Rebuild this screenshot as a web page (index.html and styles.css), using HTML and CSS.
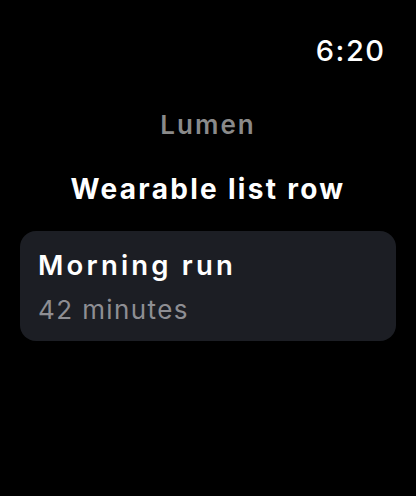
FILE: index.html
```html
<!DOCTYPE html>
<html lang="en">
<head>
    <meta charset="UTF-8">
    <meta name="viewport" content="width=device-width, initial-scale=1.0">
    <title>Wearable list row</title>
    <link rel="stylesheet" href="styles.css">
</head>
<body>
    <div class="watch">
        <div class="status-bar">
            <span class="time">6:20</span>
        </div>

        <div class="app-name">Lumen</div>
        <h1 class="title">Wearable list row</h1>

        <!-- Fila de la lista -->
        <div class="list-row">
            <div class="row-title">Morning run</div>
            <div class="row-detail">42 minutes</div>
        </div>
    </div>
</body>
</html>
```

FILE: styles.css
```css
body {
    margin: 0;
    background-color: #000;
    color: white;
    font-family: Inter, "Noto Sans", sans-serif;
}

.watch {
    width: 416px;
    height: 496px;
    padding: 0 20px;
    box-sizing: border-box;
    display: flex;
    flex-direction: column;
}

.status-bar {
    display: flex;
    justify-content: flex-end;
    padding-top: 33px;
    padding-right: 12px;
}

.time {
    font-size: 29px;
    font-weight: 500;
    line-height: 36px;
    letter-spacing: 1.5px;
    margin-right: -1.5px;
}

.app-name {
    margin-top: 40px;
    text-align: center;
    color: #8a8a8a;
    font-size: 26px;
    font-weight: 600;
    line-height: 32px;
    letter-spacing: 2px;
}

.title {
    margin: 30px 0 0;
    text-align: center;
    font-size: 28px;
    font-weight: 700;
    line-height: 36px;
    letter-spacing: 2.3px;
}

.list-row {
    margin-top: 24px;
    background-color: #1c1e24;
    border-radius: 16px;
    padding: 16px 18px;
    height: 110px;
    box-sizing: border-box;
}

.row-title {
    font-size: 27.5px;
    font-weight: 600;
    line-height: 36px;
    letter-spacing: 3.2px;
}

.row-detail {
    margin-top: 11px;
    font-size: 26px;
    color: #8e8e93;
    line-height: 32px;
    letter-spacing: 1.4px;
}
```
